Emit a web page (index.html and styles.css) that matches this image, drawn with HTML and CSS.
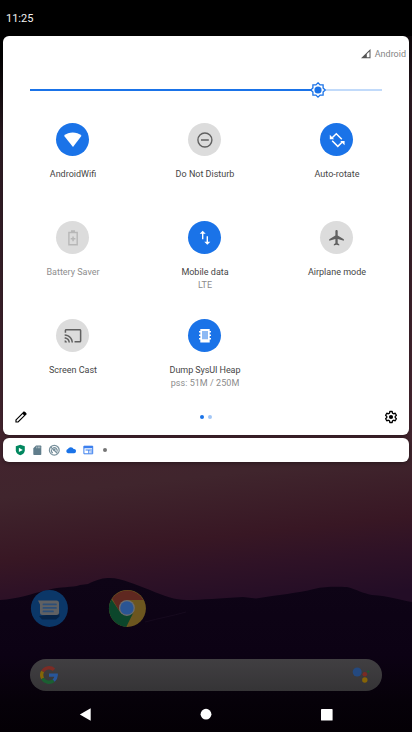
FILE: index.html
```html
<!DOCTYPE html>
<html lang="en">
<head>
<meta charset="utf-8">
<title>Quick settings</title>
<link rel="stylesheet" href="styles.css">
</head>
<body>
<div class="phone">
  <svg class="wallpaper" viewBox="0 0 412 732" aria-hidden="true">
    <defs>
      <linearGradient id="sky" gradientUnits="userSpaceOnUse" x1="160" y1="0" x2="225" y2="610">
        <stop offset="0" stop-color="#000"/>
        <stop offset=".06" stop-color="#000"/>
        <stop offset=".2" stop-color="#2b1a22"/>
        <stop offset=".7" stop-color="#43242e"/>
        <stop offset=".78" stop-color="#40252d"/>
        <stop offset=".88" stop-color="#381724"/>
        <stop offset=".93" stop-color="#2f1226"/>
        <stop offset="1" stop-color="#230d26"/>
      </linearGradient>
      <linearGradient id="hill" x1="0" y1="0" x2="0" y2="1">
        <stop offset="0" stop-color="#0e0416"/>
        <stop offset=".5" stop-color="#0c0214"/>
        <stop offset=".8" stop-color="#060109"/>
        <stop offset="1" stop-color="#040005"/>
      </linearGradient>
    </defs>
    <path fill="url(#sky)" d="M0 0h412v732H0z"/>
    <path fill="url(#hill)" d="M0 600C18 599 30 594 48 590C60 586 72 588 80 585L88 584C98 579 103 578 110 578C122 578 136 585 150 590C164 596 175 600 187 600C202 600 220 598 243 597L256 598.500C278 595 298 593 314 589C326 586 340 587 347 587C358 590 362 593 372 595C390 596 400 600 412 602V732H0z"/>
    <path fill="none" stroke="#160a1e" d="M145 622C160 618 172 616 186 612"/>
  </svg>

  <header class="status">11:25</header>

  <main class="panel">
    <div class="carrier">
      <svg width="10" height="10" viewBox="0 0 10 10"><path fill="#555" d="M0 9.300 9.500 0v9.300zM8.500 2.400 5.800 5.100v3.200h2.700z" fill-rule="evenodd"/></svg>
      <span>Android</span>
    </div>
    <div class="slider">
      <svg width="352" height="18" viewBox="0 0 352 18">
        <path fill="#c1dafa" d="M288 8h64v2h-64z"/><path fill="#1a73e8" d="M0 8h288v2H0z"/>
        <path fill="#fff" stroke="#1a73e8" stroke-width="1.300" d="M288 1.800l2.100 2.100h3v3l2.100 2.100-2.100 2.100v3h-3l-2.100 2.100-2.100-2.100h-3v-3l-2.100-2.100 2.100-2.100v-3h3z"/>
        <circle cx="288" cy="9" r="3.600" fill="#1a73e8"/>
      </svg>
    </div>
    <section class="tiles">
      <div class="tile">
        <svg class="disc on" viewBox="0 0 33 33"><path fill="#fff" d="M8 12.700C13 8.400 20.500 8.400 25.500 12.700L17 24z"/></svg>
        <span class="label">AndroidWifi</span>
      </div>
      <div class="tile">
        <svg class="disc" viewBox="0 0 33 33"><circle cx="16.900" cy="17" r="7" fill="none" stroke="#606060" stroke-width="1.400"/><path fill="#606060" d="M13 16.200h7.800v1.500H13z"/></svg>
        <span class="label">Do Not Disturb</span>
      </div>
      <div class="tile">
        <svg class="disc on" viewBox="0 0 33 33"><path fill="none" stroke="#fff" stroke-width="1.500" d="M12.200 14.800 16.300 10.700l5.500 5.500M12.200 17.800l5.600 5.600 4.200-4.200"/><path fill="#fff" d="M9.800 11.800v4.400h4.400zM24.600 22.300v-4.400h-4.400z"/></svg>
        <span class="label">Auto-rotate</span>
      </div>
      <div class="tile off">
        <svg class="disc" viewBox="0 0 33 33"><path fill="none" stroke="#b7b7b7" stroke-width="1.400" d="M12.900 11.500h8.300v12.300h-8.300z"/><path fill="#b7b7b7" d="M15 9.300h4v2h-4zM16.300 15.400h1.500V17h1.600v1.500h-1.600v1.700h-1.500v-1.700h-1.600V17h1.600z"/></svg>
        <span class="label">Battery Saver</span>
      </div>
      <div class="tile">
        <svg class="disc on" viewBox="0 0 33 33"><path fill="#fff" d="m14.700 9.800 3 3h-2.300v5.400H14v-5.400h-2.300zM18.600 15.300H20v5.500h2.300l-3 3-3-3h2.300z"/></svg>
        <span class="label">Mobile data</span>
        <span class="sub">LTE</span>
      </div>
      <div class="tile">
        <svg class="disc" viewBox="0 0 33 33"><path fill="#606060" transform="translate(7.300 7.500) scale(.77)" d="M21.500 16v-2l-8-5V3.500C13.500 2.670 12.830 2 12 2s-1.500.67-1.500 1.500V9l-8 5v2l8-2.500V19l-2 1.500V22l3.500-1 3.500 1v-1.500l-2-1.500v-5.500z"/></svg>
        <span class="label">Airplane mode</span>
      </div>
      <div class="tile">
        <svg class="disc" viewBox="0 0 33 33"><path fill="#606060" transform="translate(7.900 7.600) scale(.76)" d="M21 3H3c-1.100 0-2 .9-2 2v3h2V5h18v14h-7v2h7c1.100 0 2-.9 2-2V5c0-1.100-.9-2-2-2zM1 18v3h3c0-1.660-1.340-3-3-3zm0-4v2c2.760 0 5 2.240 5 5h2c0-3.870-3.130-7-7-7zm0-4v2c4.970 0 9 4.030 9 9h2c0-6.080-4.930-11-11-11z"/></svg>
        <span class="label">Screen Cast</span>
      </div>
      <div class="tile">
        <svg class="disc on" viewBox="0 0 33 33"><path fill="#fff" d="M12.300 10h9.400v2h1.300v1.500h-1.300v2H23V17h-1.300v2H23v1.500h-1.300V23.600h-9.400v-3.100H11V19h1.300v-2H11v-1.500h1.300v-2H11V12h1.300z"/><path fill="#8cb9f4" d="M14 12h6v8.300h-6z"/></svg>
        <span class="label heap">Dump SysUI Heap</span>
        <span class="sub wide">pss: 51M / 250M</span>
      </div>
    </section>
    <footer class="tools">
      <svg width="12" height="12" viewBox="0 0 12 12"><path fill="#fff" stroke="#000" stroke-width="1.200" d="M1 11V8.900L8.900 1l2.100 2.100L3.100 11z"/><path d="M7.300 2.600 8.900 1q.6-.6 1.200 0l.9.900q.6.600 0 1.200L9.400 4.700z"/></svg>
      <div class="pages"><i class="page current"></i><i class="page"></i></div>
      <svg width="14" height="14" viewBox="0 0 14 14"><path fill="#fff" stroke="#000" stroke-width="1.300" stroke-linejoin="round" d="M5.800 1.500h2.400l.3 1.600 1.200.7 1.500-.6 1.200 2.100L11.200 6.400v1.200l1.200 1.100-1.200 2.100-1.500-.6-1.200.7-.3 1.600H5.800l-.3-1.600-1.200-.7-1.500.6-1.200-2.100 1.200-1.100V6.400L1.600 5.300l1.200-2.100 1.500.6 1.200-.7z"/><circle cx="7" cy="7" r="2.100"/></svg>
    </footer>
  </main>

  <section class="notifications">
    <svg width="12" height="12" viewBox="-1 0 12 12"><path fill="#01875f" d="M5.300.7 9.800 2.300v3.900c0 2.500-2 4.200-4.500 5.100C2.800 10.400.8 8.700.8 6.200V2.300z"/><path fill="#fff" d="m3.900 3.700 3.900 2.200-3.900 2.200z"/></svg>
    <svg width="12" height="12" viewBox="-1 0 12 12"><path fill="#607d8b" d="M4.100 1.500h4.400q.8 0 .8.800v7.900q0 .8-.8.800H2.100q-.8 0-.8-.8V4.300z"/><path fill="#c3cfd4" d="M4.400 2.600h.8v1.700h-.8zM5.900 2.600h.8v1.700h-.8zM7.400 2.600h.8v1.700h-.8z"/></svg>
    <svg width="12" height="12" viewBox="0 0 12 12"><g fill="none" stroke="#78909c" stroke-width="1.200"><circle cx="6.300" cy="6.200" r="4.900"/><path d="M4.800 9a3 3 0 0 1-1.200-3.600M5.200 3.900a3 3 0 0 1 3.900 3.700M3 3.300l6.500 6.200"/></g><circle cx="6.300" cy="5.800" r="1.300" fill="#78909c"/></svg>
    <svg width="12" height="12" viewBox="0 0 12 12"><path fill="#1a73e8" d="M3 9.200A2.100 2.100 0 0 1 2.900 5.100 3.200 3.200 0 0 1 8.700 5 2.100 2.100 0 0 1 9.200 9.200z"/></svg>
    <svg width="12" height="12" viewBox="-1 0 12 12"><path fill="#fff" stroke="#3b7fee" d="M.9 2.200h8.800v7.600H.9z"/><path fill="#3b7fee" d="M.8 2h9v2.200h-9zM2.500 5.600h6.800v1H6.300v3h-1v-3H2.500zM7.300 7.600h2v1h-2z"/></svg>
    <i class="more"></i>
  </section>

  <section class="home">
    <div class="apps">
      <svg width="38" height="38" viewBox="0 0 38 38"><circle cx="19.400" cy="19.400" r="18.500" fill="#0b3768"/><path fill="#062448" d="m9 27 3 3.500h14l3.500-3v-3z"/><path fill="#606163" d="M8 11.500H26.500q2.500 0 2.500 2.500v9.500q0 2.500-2.500 2.500h-14q-2.500 0-2.500-2.500V15.500z"/><path stroke="#2c4f78" stroke-width="1.700" stroke-linecap="round" d="M13.400 15.400h12.600M13.400 18.900h12.600M13.400 22.400h9.600"/></svg>
      <svg width="38" height="38" viewBox="0 0 38 38"><circle cx="19.400" cy="19.400" r="18.500" fill="#6c561f"/><path fill="#0c462b" d="M3.400 10.200A18.500 18.500 0 0 0 18.200 37.900L25.400 23.400H12.400z"/><path fill="#5f2820" d="M4.100 9.400A18.500 18.500 0 0 1 35.400 10.900H19.400L11 21.400z"/><circle cx="18.900" cy="18.900" r="8" fill="#6c6c6e"/><circle cx="18.900" cy="18.900" r="6.700" fill="#2a5593"/></svg>
    </div>
    <div class="search">
      <svg width="18" height="18" viewBox="0 0 18 18"><g fill="none" stroke-width="3.300"><path stroke="#7c2c25" d="M2.600 5.500A7.300 7.300 0 0 1 14 3.800"/><path stroke="#836608" d="M2.600 12.500a7.300 7.300 0 0 1 0-7"/><path stroke="#1b5f32" d="M13.600 14.600a7.300 7.300 0 0 1-11-2.100"/><path stroke="#28569a" d="M9 9.200h7.200a7.300 7.300 0 0 1-2.600 5.400"/></g></svg>
      <svg width="18" height="18" viewBox="0 0 18 18"><circle cx="5.200" cy="6" r="4.500" fill="#24497f"/><circle cx="12.800" cy="8.200" r="2.300" fill="#7a2b24"/><circle cx="12.800" cy="14" r="2.700" fill="#866407"/><circle cx="16.200" cy="5.600" r="1.100" fill="#1b5c30"/></svg>
    </div>
  </section>

  <nav class="nav">
    <svg width="12" height="14" viewBox="0 0 12 14"><path d="M-.2 6.500 10.700.3v12.400z"/></svg>
    <svg width="12" height="14" viewBox="0 0 12 14"><circle cx="5" cy="6.200" r="5.400"/></svg>
    <svg width="12" height="14" viewBox="0 0 12 14"><rect x="0" y="1" width="11.600" height="11.600" rx=".7"/></svg>
  </nav>
</div>
</body>
</html>
```
FILE: styles.css
```css
* { box-sizing: border-box; }
body { margin: 0; background: #000; font-family: Roboto, "Liberation Sans", sans-serif; }
svg { display: block; flex: none; }
.phone { position: relative; isolation: isolate; display: flex; flex-direction: column; width: 412px; height: 732px; overflow: hidden; }
.wallpaper { position: absolute; inset: 0; z-index: -1; width: 412px; height: 732px; }
.status { height: 36px; padding: 0 6px; color: #f2f2f2; font-size: 11px; line-height: 37px; background: #000; }

.panel { display: flex; flex-direction: column; height: 399px; margin: 0 3px; border-radius: 6px; background: #fff; box-shadow: 0 1px 3px rgba(0, 0, 0, .3); }
.carrier { display: flex; justify-content: flex-end; align-items: center; gap: 3.500px; height: 36px; padding: 0 3px 0 0; color: #858585; font-size: 9px; }
.slider { height: 51px; padding: 9px 27px 0; }
.tiles { display: grid; grid-template-columns: repeat(3, 132px); grid-auto-rows: 98px; padding-left: 3.500px; }
.tile { display: flex; flex-direction: column; align-items: center; color: #464646; font-size: 9px; white-space: nowrap; }
.disc { width: 33px; height: 33px; border-radius: 50%; background: #dcdcdc; }
.disc.on { background: #1a73e8; }
.label { margin-top: 11px; padding-left: 1px; line-height: 14px; }
.sub { padding-left: 1px; line-height: 12px; color: #8c8c8c; }
.wide { letter-spacing: .05px; }
.heap { letter-spacing: -.08px; }
.off { color: #8e8e8e; }
.tools { display: flex; align-items: center; justify-content: space-between; height: 18px; margin-top: -9px; padding: 0 11px 0 12px; }
.pages { display: flex; gap: 4px; margin-left: 1px; }
.page { width: 4px; height: 4px; border-radius: 50%; background: #a3c7f6; }
.page.current { background: #1a73e8; }

.notifications { display: flex; align-items: center; gap: 5px; height: 24px; margin: 3px 3px 0; padding-left: 11px; border-radius: 6px; background: #fff; box-shadow: 0 1px 4px rgba(0, 0, 0, .4); }
.more { width: 4px; height: 4px; margin-left: 4px; border-radius: 50%; background: #757575; }

.home { display: flex; flex-direction: column; flex: 1; justify-content: flex-end; }
.apps { display: flex; gap: 40px; padding-left: 30px; }
.search { display: flex; align-items: center; justify-content: space-between; height: 32px; margin: 32px 30px 0; padding: 0 12px 0 10px; border-radius: 16px; background: linear-gradient(#413f42, #353436); }
.nav { display: flex; justify-content: space-between; height: 41px; padding: 17px 79px 0 80px; fill: #fff; }
.nav svg { overflow: visible; }
```
